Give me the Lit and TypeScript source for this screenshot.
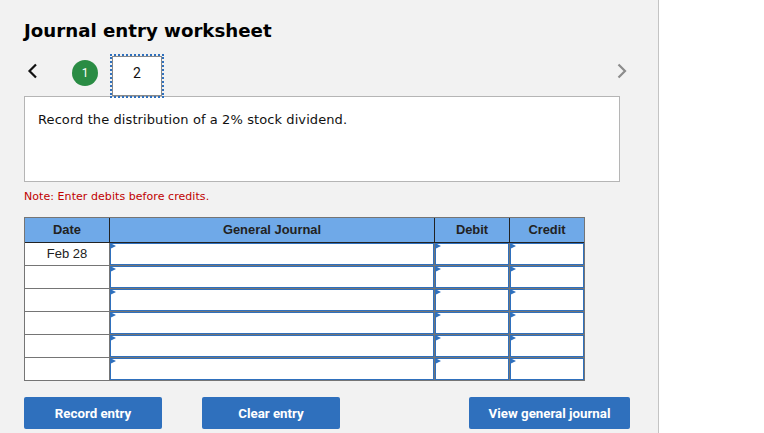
import { LitElement, html, css } from "lit";
import { customElement } from "lit/decorators.js";

const rows = ["Feb 28", "", "", "", "", ""];

@customElement("app-root")
export class AppRoot extends LitElement {
  static styles = css`
    :host {
      display: block;
      width: 764px;
      height: 433px;
      overflow: hidden;
      background: #fff;
    }
    * {
      box-sizing: border-box;
    }
    .panel {
      width: 659px;
      height: 433px;
      background: #f2f2f2;
      border-right: 1px solid #c4c4c4;
      padding: 19px 0 0 24px;
      font-family: "DejaVu Sans", sans-serif;
    }
    h1 {
      margin: 0;
      font-size: 18.2px;
      line-height: 24px;
      font-weight: 700;
      color: #000;
    }
    .steps {
      display: flex;
      align-items: flex-start;
      height: 42px;
      margin-top: 11px;
      width: 603px;
      position: relative;
      z-index: 1;
    }
    .back {
      width: 48px;
      margin-top: 9px;
    }
    .done {
      width: 26px;
      height: 26px;
      margin-top: 6px;
      border-radius: 50%;
      background: #2a8c44;
      color: #fff;
      font: 12px/26px Roboto, sans-serif;
      text-align: center;
    }
    .current {
      width: 50px;
      height: 40px;
      margin: 2px 0 0 14px;
      background: #fff;
      border: 1px solid #8a8a8a;
      outline: 2px dotted #2f70bd;
      font: 14px/32px Roboto, sans-serif;
      text-align: center;
      color: #111;
    }
    .next {
      margin-left: auto;
      margin-top: 9px;
    }
    .prompt {
      width: 596px;
      height: 86px;
      background: #fff;
      border: 1px solid #b5b5b5;
      padding: 14px 13px;
      font-size: 13px;
      letter-spacing: 0.09px;
      line-height: 17px;
      color: #111;
    }
    .note {
      margin: 7px 0 0;
      height: 15px;
      font-size: 11px;
      letter-spacing: 0.06px;
      line-height: 15px;
      color: #c00000;
    }
    .table {
      display: grid;
      grid-template-columns: 85px 325px 75px 74px;
      grid-template-rows: 25px repeat(5, 23px) 22px;
      width: 561px;
      margin-top: 13px;
      border: 1px solid #757575;
      font-family: "Liberation Sans", sans-serif;
      background: #fff;
    }
    .head {
      background: #6fa9e8;
      border-right: 1px solid #222;
      border-bottom: 1px solid #222;
      font-size: 12.9px;
      font-weight: 700;
      line-height: 23px;
      text-align: center;
      color: #222;
    }
    .head.last {
      border-right: 0;
    }
    .date {
      border-right: 1px solid #757575;
      border-bottom: 1px solid #757575;
      font-size: 13px;
      line-height: 21px;
      text-align: center;
      color: #222;
    }
    .date.end {
      border-bottom: 0;
    }
    .cell {
      position: relative;
      border-right: 1px solid #757575;
      border-bottom: 1px solid #757575;
      background: #fff;
    }
    .cell.end {
      border-bottom: 0;
    }
    .cell.last {
      border-right: 0;
    }
    .cell::after {
      content: "";
      position: absolute;
      inset: 0;
      border: 1px solid #2f70bd;
    }
    .cell::before {
      content: "";
      position: absolute;
      left: 0;
      top: 0;
      border-left: 6px solid #2f70bd;
      border-top: 3px solid transparent;
      border-bottom: 3px solid transparent;
    }
    .actions {
      display: flex;
      gap: 40px;
      width: 606px;
      margin-top: 16px;
    }
    button {
      width: 138px;
      height: 32px;
      padding: 0;
      border: 0;
      border-radius: 2px;
      background: #2f70bd;
      color: #fff;
      font: 700 13.3px Roboto, sans-serif;
    }
    button.wide {
      width: 161px;
      margin-left: auto;
    }
  `;

  render() {
    return html`
      <div class="panel">
        <h1>Journal entry worksheet</h1>
        <div class="steps">
          <svg class="back" width="48" height="16" viewBox="0 0 48 16">
            <path d="M12 1.5 5.5 8 12 14.5" fill="none" stroke="#111" stroke-width="2.2" />
          </svg>
          <div class="done">1</div>
          <div class="current">2</div>
          <svg class="next" width="10" height="16" viewBox="0 0 10 16">
            <path d="M1.5 1.5 8 8 1.5 14.5" fill="none" stroke="#8c8c8c" stroke-width="2.2" />
          </svg>
        </div>
        <div class="prompt">Record the distribution of a 2% stock dividend.</div>
        <p class="note">Note: Enter debits before credits.</p>
        <div class="table">
          <div class="head">Date</div>
          <div class="head">General Journal</div>
          <div class="head">Debit</div>
          <div class="head last">Credit</div>
          ${rows.map((r, i) => {
            const end = i === rows.length - 1 ? "end" : "";
            return html`
              <div class="date ${end}">${r}</div>
              <div class="cell ${end}"></div>
              <div class="cell ${end}"></div>
              <div class="cell last ${end}"></div>
            `;
          })}
        </div>
        <div class="actions">
          <button>Record entry</button>
          <button>Clear entry</button>
          <button class="wide">View general journal</button>
        </div>
      </div>
    `;
  }
}
